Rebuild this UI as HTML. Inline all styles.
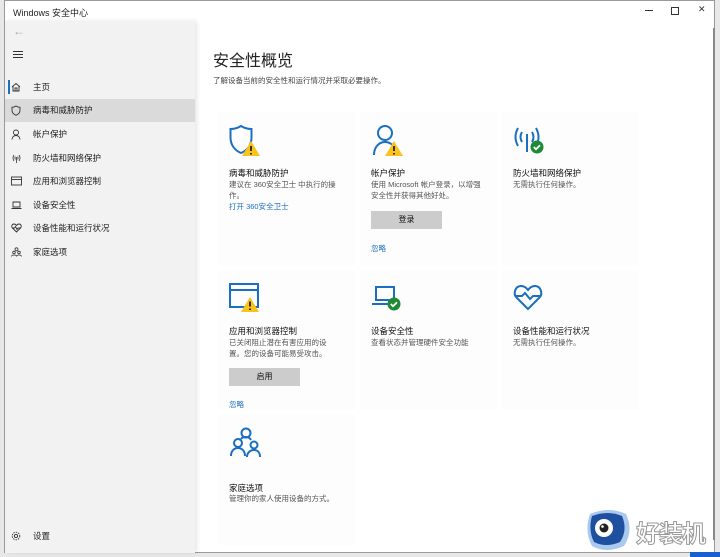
<!DOCTYPE html>
<html><head><meta charset="utf-8"><style>
*{margin:0;padding:0;box-sizing:border-box}
body{width:720px;height:557px;overflow:hidden;background:#e8e8e8;font-family:"Liberation Sans","Noto Sans CJK SC",sans-serif;position:relative;color:#222}
.win{position:absolute;left:4px;top:0;width:711px;height:553px;background:#fff;border:1px solid #9a9a9a}
.title{position:absolute;left:8px;top:5px;font-size:9px;color:#222}
.ctl{position:absolute;top:2px;font-size:9px;color:#333}
.side{position:absolute;left:0;top:20px;width:190px;height:532px;background:#f2f2f2;box-shadow:2px 0 4px rgba(0,0,0,.1)}
.nav{position:absolute;left:0;width:190px;height:23px;font-size:8.5px;line-height:23px;padding-left:28px;color:#222}
.nav svg{position:absolute;left:6px;top:6px}
.sel{background:#dadada}
h1{position:absolute;left:213px;top:47px;font-size:16px;font-weight:normal;color:#222}
.sub{position:absolute;left:213px;top:75px;font-size:7.5px;color:#444}
.card{position:absolute;width:137px;background:#fdfdfd}
.card .ic{position:absolute;left:11px;top:12px}
.card .t{position:absolute;left:11px;top:55px;font-size:8.5px;color:#111}
.card .d{position:absolute;left:11px;top:67px;font-size:7.5px;line-height:11px;color:#555;width:112px}
.link{font-size:7.5px;color:#1a6fc0;position:absolute;left:11px}
.btn{position:absolute;left:11px;width:71px;height:18px;background:#ccc;font-size:8px;text-align:center;line-height:18px;color:#111}
</style></head><body>
<div class="win">
<div class="title">Windows 安全中心</div>
<div style="position:absolute;left:640px;top:9px;width:8px;height:1px;background:#333"></div>
<div style="position:absolute;left:666px;top:6px;width:8px;height:8px;border:1px solid #333"></div>
<div class="ctl" style="left:693px;top:3px">✕</div>
<div style="position:absolute;left:708px;top:27px;width:1.5px;height:512px;background:#888"></div>
<div class="side">
<div style="position:absolute;left:8px;top:3px;font-size:12px;color:#aaa">←</div>
<div style="position:absolute;left:8px;top:30px;width:10px;height:7px;border-top:1px solid #333;border-bottom:1px solid #333"></div>
<div style="position:absolute;left:8px;top:33px;width:10px;height:1px;background:#333"></div>
<div style="position:absolute;left:3px;top:59px;width:1.5px;height:14px;background:#1a6fc0"></div>
<div class="nav" style="top:55px"><svg width="10" height="10" viewBox="0 0 10 10" fill="none" stroke="#333" stroke-width=".9"><path d="M1 5L5 1.5L9 5M2 4v5h6V4M4 9V6h2v3"/></svg>主页</div>
<div class="nav sel" style="top:78px"><svg width="10" height="11" viewBox="0 0 10 11" fill="none" stroke="#333" stroke-width=".9"><path d="M5 1C3.5 2 2 2.3 1 2.3v3C1 8 3 9.5 5 10.3 7 9.5 9 8 9 5.3v-3C8 2.3 6.5 2 5 1z"/></svg>病毒和威胁防护</div>
<div class="nav" style="top:102px"><svg width="10" height="11" viewBox="0 0 10 11" fill="none" stroke="#333" stroke-width=".9"><circle cx="5" cy="3.5" r="2.5"/><path d="M1 10.5C1 8 2.8 6.5 5 6.5S9 8 9 10.5"/></svg>帐户保护</div>
<div class="nav" style="top:126px"><svg width="11" height="10" viewBox="0 0 11 10" fill="none" stroke="#333" stroke-width=".8"><path d="M3 2Q1 5 3 8M8 2Q10 5 8 8M4.3 3.5Q3.5 5 4.3 6.5M6.7 3.5Q7.5 5 6.7 6.5M5.5 4v6"/></svg>防火墙和网络保护</div>
<div class="nav" style="top:149px"><svg width="11" height="10" viewBox="0 0 11 10" fill="none" stroke="#333" stroke-width=".9"><rect x=".5" y="1" width="10" height="8"/><path d="M.5 3.5h10"/></svg>应用和浏览器控制</div>
<div class="nav" style="top:173px"><svg width="11" height="10" viewBox="0 0 11 10" fill="none" stroke="#333" stroke-width=".9"><path d="M2 2h7v5H2zM.5 8.5h10"/></svg>设备安全性</div>
<div class="nav" style="top:196px"><svg width="11" height="10" viewBox="0 0 11 10" fill="none" stroke="#333" stroke-width=".9"><path d="M5.5 9L1.5 5C0 3.5 1 1 3 1c1.2 0 2 .8 2.5 1.5C6 1.8 6.8 1 8 1c2 0 3 2.5 1.5 4zM1 5h2.5l1-1.5 1.5 3 1-1.5H10"/></svg>设备性能和运行状况</div>
<div class="nav" style="top:220px"><svg width="11" height="10" viewBox="0 0 11 10" fill="none" stroke="#333" stroke-width=".8"><circle cx="5.5" cy="2.3" r="1.5"/><circle cx="3" cy="5.5" r="1.3"/><circle cx="8" cy="5.5" r="1.3"/><path d="M.5 9.5C.5 7.5 5.5 7.5 5.5 9.5 5.5 7.5 10.5 7.5 10.5 9.5"/></svg>家庭选项</div>
<div class="nav" style="top:504px"><svg width="10" height="10" viewBox="0 0 10 10" fill="none" stroke="#333" stroke-width=".9"><circle cx="5" cy="5" r="1.6"/><circle cx="5" cy="5" r="3.8" stroke-dasharray="1.5 1"/></svg>设置</div>
</div>
</div>
<h1>安全性概览</h1>
<div class="sub">了解设备当前的安全性和运行情况并采取必要操作。</div>

<div class="card" style="left:218px;top:112px;height:153px">
<svg class="ic" width="32" height="34" viewBox="0 0 32 34"><path d="M12 2C8 4.5 4 5 1.5 5v8.5C1.5 22 7 27 12 29 17 27 22.5 22 22.5 13.5V5C20 5 16 4.5 12 2z" fill="none" stroke="#1a6fc0" stroke-width="2"/><path d="M22 17L31 32H13z" fill="#f7c31c"/><path d="M22 22v5M22 29v1.5" stroke="#111" stroke-width="1.6"/></svg>
<div class="t">病毒和威胁防护</div>
<div class="d">建议在 360安全卫士 中执行的操作。</div>
<div class="link" style="top:89px">打开 360安全卫士</div>
</div>
<div class="card" style="left:360px;top:112px;height:153px">
<svg class="ic" width="34" height="34" viewBox="0 0 34 34"><circle cx="14" cy="9" r="7" fill="none" stroke="#1a6fc0" stroke-width="2"/><path d="M3 31C3 23 8 18 14 18c3 0 5 1 7 2.5" fill="none" stroke="#1a6fc0" stroke-width="2"/><path d="M23 17L32 32H14z" fill="#f7c31c"/><path d="M23 22v5M23 29v1.5" stroke="#111" stroke-width="1.6"/></svg>
<div class="t">帐户保护</div>
<div class="d">使用 Microsoft 帐户登录，以增强安全性并获得其他好处。</div>
<div class="btn" style="top:99px">登录</div>
<div class="link" style="top:131px">忽略</div>
</div>
<div class="card" style="left:502px;top:112px;height:153px">
<svg class="ic" width="34" height="32" viewBox="0 0 34 32"><g fill="none" stroke="#1a6fc0" stroke-width="2"><path d="M5 4Q0 13 5 22M23 4Q28 13 23 22M9 8Q6 13 9 18M19 8Q22 13 19 18M14 10v18"/></g><circle cx="24" cy="23" r="6.5" fill="#1e8b34"/><path d="M20.8 23l2.2 2.2 4-4" stroke="#fff" stroke-width="1.8" fill="none"/></svg>
<div class="t">防火墙和网络保护</div>
<div class="d">无需执行任何操作。</div>
</div>

<div class="card" style="left:218px;top:270px;height:140px">
<svg class="ic" width="34" height="32" viewBox="0 0 34 32"><g fill="none" stroke="#1a6fc0" stroke-width="2"><rect x="1" y="2" width="28" height="23"/><path d="M1 8h28"/></g><path d="M21 15L30 30H12z" fill="#f7c31c"/><path d="M21 19.5v5M21 26.5v1.5" stroke="#111" stroke-width="1.6"/></svg>
<div class="t">应用和浏览器控制</div>
<div class="d">已关闭阻止潜在有害应用的设置。您的设备可能易受攻击。</div>
<div class="btn" style="top:98px">启用</div>
<div class="link" style="top:129px">忽略</div>
</div>
<div class="card" style="left:360px;top:270px;height:140px">
<svg class="ic" width="34" height="30" viewBox="0 0 34 30"><g fill="none" stroke="#1a6fc0" stroke-width="2"><path d="M5 5h18v13H5zM1 22h19"/></g><circle cx="23" cy="22" r="6.5" fill="#1e8b34"/><path d="M19.8 22l2.2 2.2 4-4" stroke="#fff" stroke-width="1.8" fill="none"/></svg>
<div class="t">设备安全性</div>
<div class="d">查看状态并管理硬件安全功能</div>
</div>
<div class="card" style="left:502px;top:270px;height:140px">
<svg class="ic" width="34" height="30" viewBox="0 0 34 30"><g fill="none" stroke="#1a6fc0" stroke-width="2"><path d="M15 27L3.5 15.5C0 12 2 4 8 4c3.5 0 5.5 2 7 4 1.5-2 3.5-4 7-4 6 0 8 8 4.5 11.5z"/><path d="M2 14h7l3-3 5 6 3-3h8"/></g></svg>
<div class="t">设备性能和运行状况</div>
<div class="d">无需执行任何操作。</div>
</div>

<div class="card" style="left:218px;top:415px;height:130px">
<svg class="ic" width="34" height="34" viewBox="0 0 34 34" style="top:11px"><g fill="none" stroke="#1a6fc0" stroke-width="2"><circle cx="17" cy="7" r="4.5"/><circle cx="9" cy="17" r="4"/><circle cx="25" cy="19" r="3.5"/><path d="M2 30c0-5 3-8 7-8s7 3 7 8M18 31c0-4 3-7 7-7s6 3 6 7M12 13c1-1.5 3-2 5-2s4 1 5 3"/></g></svg>
<div class="t" style="top:67px">家庭选项</div>
<div class="d" style="top:78px">管理你的家人使用设备的方式。</div>
</div>

<svg style="position:absolute;left:584px;top:506px" width="50" height="46" viewBox="0 0 50 46"><path d="M6 8Q25 0 42 8Q50 25 40 40Q22 48 8 40Q0 25 6 8z" fill="#a9c9ee"/><path d="M8 10Q24 4 38 10Q44 24 36 36Q22 42 10 36Q4 24 8 10z" fill="#1f4f9f"/><circle cx="20" cy="22" r="9" fill="#fff"/><circle cx="20" cy="22" r="4.5" fill="#222"/><circle cx="18.5" cy="20.5" r="1.3" fill="#fff"/></svg>
<div style="position:absolute;left:636px;top:514px;font-size:24px;color:#fff;-webkit-text-stroke:1px #999;font-weight:bold;letter-spacing:-1px">好装机</div>
<div style="position:absolute;left:690px;top:552px;width:30px;height:5px;background:#1a5fd0"></div>
</body></html>
